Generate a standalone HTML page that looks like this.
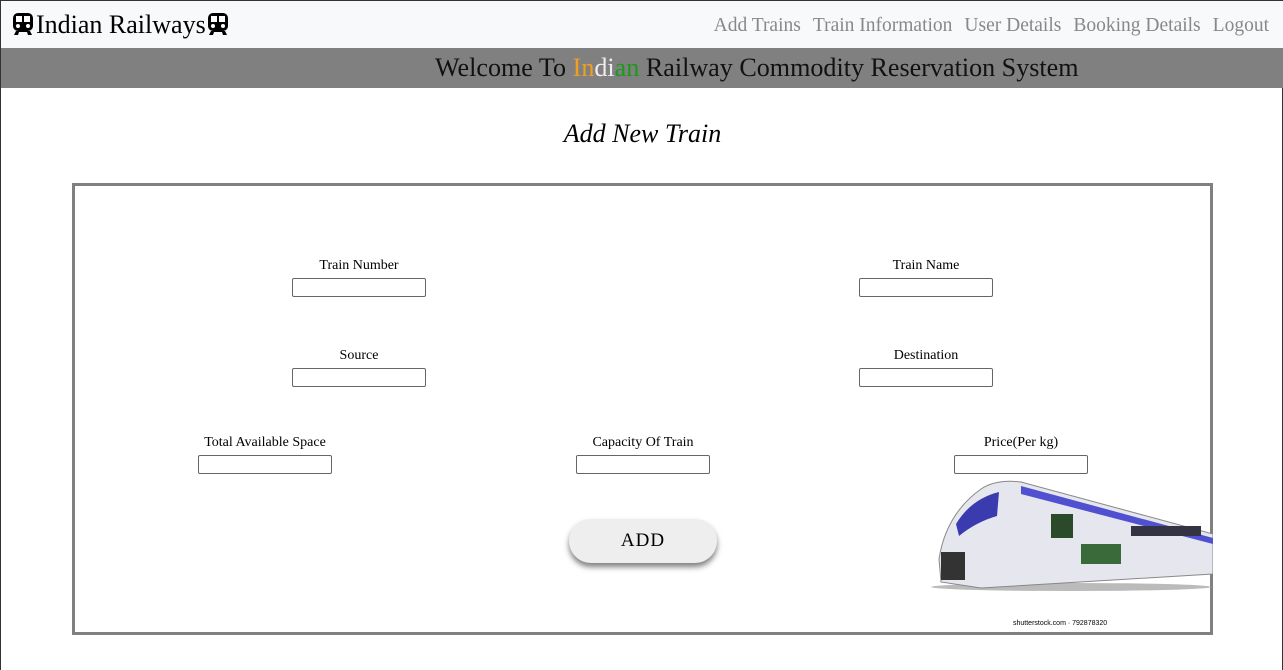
<!DOCTYPE html>
<html><head><style>
body{margin:0;width:1283px;height:670px;overflow:hidden;background:#fff;font-family:"Liberation Serif",serif;position:relative;border-left:1px solid #333;border-right:1px solid #333;box-sizing:border-box}
.top{position:absolute;left:0;top:0;width:1283px;height:48px;background:#f8f9fa;border-top:1px solid #333;box-sizing:border-box}
.brand{position:absolute;left:10px;top:9px;font-size:26px;color:#000}
.nav{position:absolute;right:15px;top:14px;font-size:19.5px;color:#888}
.nav span{margin-left:12px}
.bar{position:absolute;left:0;top:48px;width:1283px;height:40px;background:#808080}
.bar div{position:absolute;left:434px;top:5px;font-size:26.1px;color:#111}
h2{position:absolute;left:0;width:1283px;top:119px;margin:0;text-align:center;font-weight:normal;font-style:italic;font-size:26px}
.box{position:absolute;left:71px;top:183px;width:1141px;height:452px;border:3px solid #808080;box-sizing:border-box}
.f{position:absolute;text-align:center;font-size:14px;width:200px}
.f input{display:block;margin:4px auto 0;width:134px;height:19px;box-sizing:border-box;border:1px solid #666;border-radius:2px}
.btn{position:absolute;left:494px;top:333px;width:148px;height:44px;border-radius:22px;background:#eee;box-shadow:0 4px 6px rgba(0,0,0,.5);text-align:center;line-height:44px;font-size:19px;letter-spacing:1px}
.ico{display:inline-block;width:22px;height:24px;vertical-align:-3px;margin:0 2px 0 1px}
</style></head><body>
<div class="top">
<div class="brand"><svg class="ico" viewBox="0 0 22 24"><rect x="1" y="1" width="20" height="18" rx="5"/><rect x="4" y="4" width="6" height="6" fill="#fff"/><rect x="12" y="4" width="6" height="6" fill="#fff"/><circle cx="6" cy="14" r="2" fill="#fff"/><circle cx="16" cy="14" r="2" fill="#fff"/><path d="M4 19 L2 23 H6 L7 20 H15 L16 23 H20 L18 19Z"/></svg>Indian Railways<svg class="ico" viewBox="0 0 22 24"><rect x="1" y="1" width="20" height="18" rx="5"/><rect x="4" y="4" width="6" height="6" fill="#fff"/><rect x="12" y="4" width="6" height="6" fill="#fff"/><circle cx="6" cy="14" r="2" fill="#fff"/><circle cx="16" cy="14" r="2" fill="#fff"/><path d="M4 19 L2 23 H6 L7 20 H15 L16 23 H20 L18 19Z"/></svg></div>
<div class="nav"><span>Add Trains</span><span>Train Information</span><span>User Details</span><span>Booking Details</span><span>Logout</span></div>
</div>
<div class="bar"><div>Welcome To <span style="color:#f0a020">In</span><span style="color:#eee">di</span><span style="color:#1a9a1a">an</span> Railway Commodity Reservation System</div></div>
<h2>Add New Train</h2>
<div class="box">
<div class="f" style="left:184px;top:72px">Train Number<input></div>
<div class="f" style="left:751px;top:72px">Train Name<input></div>
<div class="f" style="left:184px;top:162px">Source<input></div>
<div class="f" style="left:751px;top:162px">Destination<input></div>
<div class="f" style="left:90px;top:249px">Total Available Space<input></div>
<div class="f" style="left:468px;top:249px">Capacity Of Train<input></div>
<div class="f" style="left:846px;top:249px">Price(Per kg)<input></div>
<div class="btn">ADD</div>
<svg style="position:absolute;left:846px;top:288px" width="292" height="160" viewBox="0 0 292 160">
<ellipse cx="150" cy="113" rx="140" ry="4" fill="#bbb"/>
<path d="M20 108 L18 85 Q25 40 60 15 Q75 5 100 8 L292 60 L292 100 L60 114Z" fill="#e6e6ee" stroke="#888"/>
<path d="M35 50 Q50 25 78 18 L76 42 Q55 48 38 62Z" fill="#3b3bb0"/>
<rect x="20" y="78" width="24" height="28" fill="#333"/>
<path d="M100 12 L292 64 L292 70 L100 20Z" fill="#5050d0"/>
<rect x="130" y="40" width="22" height="24" fill="#2a4a2a"/>
<rect x="160" y="70" width="40" height="20" fill="#3a6a3a"/>
<rect x="210" y="52" width="70" height="10" fill="#334"/>
<text x="92" y="151" font-family="Liberation Sans" font-size="7">shutterstock.com · 792878320</text>
<line x1="-9" y1="145" x2="-9" y2="160" stroke="#000"/>
</svg>
</div>
</body></html>
